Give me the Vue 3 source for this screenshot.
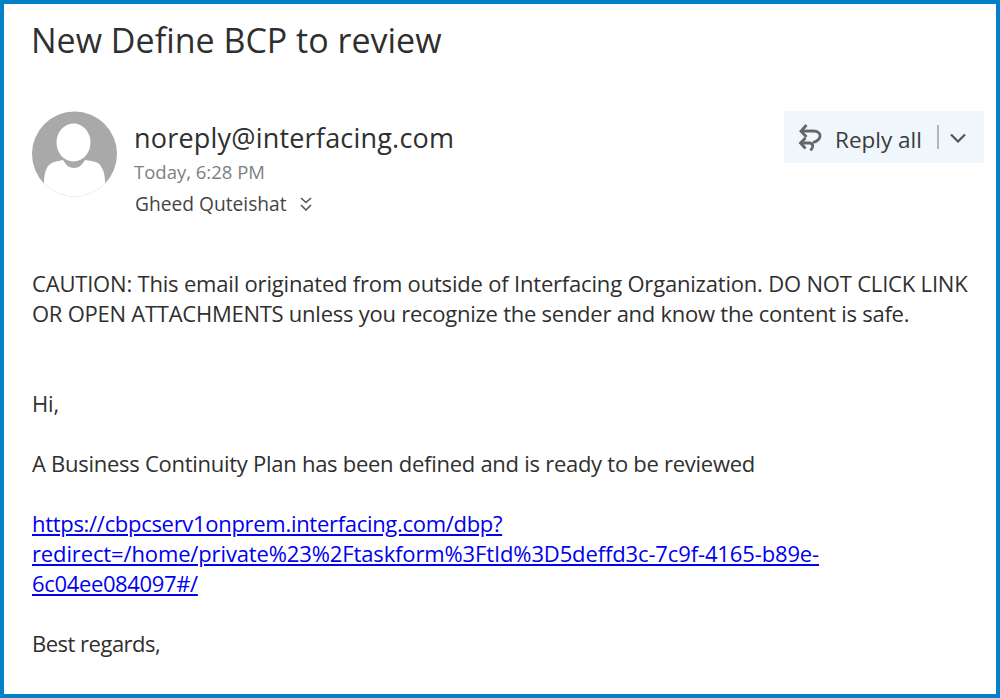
<template>
  <div class="frame">
    <h1 class="subject">New Define BCP to review</h1>

    <div class="header">
      <div class="avatar">
        <svg width="86" height="86" viewBox="0 0 86 86">
          <defs>
            <clipPath id="avatar-clip"><circle cx="42.5" cy="43" r="42.5" /></clipPath>
          </defs>
          <circle cx="42.5" cy="43" r="42.5" fill="#a9a9a9" />
          <g clip-path="url(#avatar-clip)" fill="#fff">
            <ellipse cx="41.5" cy="31.5" rx="17" ry="19" />
            <path d="M12 86 L12 70 C12.5 60 15 54 21 51.5 C25 50 28 49.5 31 49 C34 54 37 57 42 57 C47 57 50 54 53 49 C57 49.5 62 50 66 52 C70 55 73 62 73 70 L73 86 Z" />
          </g>
        </svg>
      </div>
      <div class="meta">
        <div class="sender">noreply@interfacing.com</div>
        <div class="time">Today, 6:28 PM</div>
        <div class="to">
          <span>Gheed Quteishat</span>
          <svg width="12" height="14" viewBox="0 0 12 14" fill="none" stroke="#555" stroke-width="1.6">
            <path d="M1 1 L6 5.5 L11 1" />
            <path d="M1 8 L6 13 L11 8" />
          </svg>
        </div>
      </div>
      <div class="reply">
        <svg class="reply-icon" width="24" height="28" viewBox="0 0 24 28" fill="none" stroke="#666" stroke-width="2.8">
          <path d="M8.5 2 L3 8.2 L8.5 14" />
          <path d="M3 8.2 L15 8 C20.5 8 22.5 11 22 13.5 C21.5 17 18.5 18.5 15 19.5" />
          <path d="M7.5 15 L2.5 20 L7.5 25.5" />
          <path d="M2.5 20 L12 20 C15 20.5 16 23.5 12.5 27.5" />
        </svg>
        <span class="reply-label">Reply all</span>
        <span class="reply-sep"></span>
        <svg class="reply-caret" width="16" height="10" viewBox="0 0 16 10" fill="none" stroke="#555" stroke-width="2.2">
          <path d="M1 1.5 L8 8.5 L15 1.5" />
        </svg>
      </div>
    </div>

    <div class="body">
      <p class="caution">
        CAUTION: This email originated from outside of Interfacing Organization. DO NOT CLICK LINK<br />
        <span class="tight">OR OPEN ATTACHMENTS unless you recognize the sender and know the content is safe.</span>
      </p>
      <p>Hi,</p>
      <p class="tighter">A Business Continuity Plan has been defined and is ready to be reviewed</p>
      <p>
        <a href="#"><span class="url-first">https://cbpcserv1onprem.interfacing.com/dbp?</span><br /><span class="url-long">redirect=/home/private%23%2Ftaskform%3FtId%3D5deffd3c-7c9f-4165-b89e-</span><br /><span class="url-end">6c04ee084097#/</span></a>
      </p>
      <p class="sign">Best regards,</p>
    </div>
  </div>
</template>

<script setup>
</script>

<style>
html,
body {
  margin: 0;
  background: #fff;
}
</style>

<style scoped>
.frame {
  box-sizing: border-box;
  width: 1000px;
  height: 698px;
  border: 4px solid #0480c6;
  padding: 0 12px 0 28px;
  overflow: hidden;
  background: #fff;
  color: #2f2f2f;
  font-family: "Open Sans", "Noto Sans", sans-serif;
}

.subject {
  margin: 12px 0 0 -1px;
  font-size: 34px;
  line-height: 48px;
  font-weight: 400;
}

.header {
  display: flex;
  align-items: flex-start;
  margin-top: 47px;
}

.avatar {
  width: 86px;
  height: 86px;
}

.meta {
  margin-left: 16px;
}

.sender {
  font-size: 27px;
  line-height: 36px;
  letter-spacing: 0.2px;
  margin-top: 9px;
}

.time {
  font-size: 18.5px;
  line-height: 26px;
  color: #808080;
  margin-top: 3px;
}

.to {
  display: flex;
  align-items: center;
  gap: 13px;
  margin: 6px 0 0 1px;
  font-size: 19.2px;
  line-height: 26px;
  color: #444;
}

.reply {
  display: flex;
  align-items: center;
  height: 52px;
  width: 200px;
  box-sizing: border-box;
  margin-left: auto;
  padding-left: 14px;
  background: #eff6fc;
}

.reply-label {
  margin: 4px 0 0 13px;
  font-size: 22.5px;
  color: #3b3b3b;
}

.reply-sep {
  width: 2px;
  height: 24px;
  margin: 0 10px 0 15px;
  background: #b4b4be;
}

.reply-caret {
  margin: 2px 0 0 1px;
}

.body {
  margin-top: 51px;
  font-size: 22px;
  line-height: 30px;
  letter-spacing: -0.19px;
}

.body p {
  margin: 0 0 30px;
}

.body .caution {
  margin-bottom: 60px;
}

.tight {
  letter-spacing: -0.25px;
}

.tighter {
  letter-spacing: -0.27px;
}

.url-first {
  letter-spacing: -0.3px;
}

.url-long {
  letter-spacing: -0.13px;
}

.url-end {
  letter-spacing: -0.35px;
}

.sign {
  letter-spacing: -0.5px;
}

a {
  color: #0000ee;
  text-decoration: underline;
}
</style>
